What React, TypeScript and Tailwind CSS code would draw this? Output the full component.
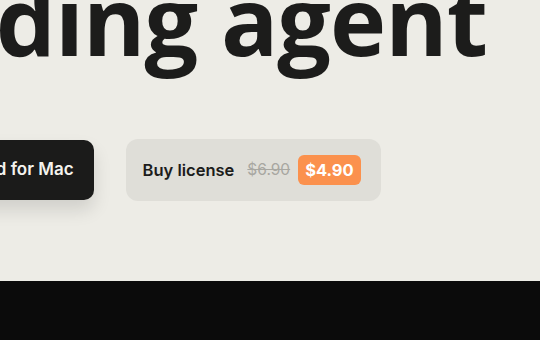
import React from 'react';

export default function App() {
  return (
    <div className="w-[540px] h-[340px] overflow-hidden bg-[#edece6]" style={{ fontFamily: 'Inter, "Liberation Sans", sans-serif' }}>
      <section className="h-[281px] flex flex-col overflow-hidden">
        <h1
          className="-mt-[28px] -ml-[110px] whitespace-nowrap text-[95px] leading-none font-bold tracking-[-0.01em] text-[#1c1c1b]"
          style={{ fontFamily: '"Open Sans", "Noto Sans", sans-serif' }}
        >
          coding agent
        </h1>
        <div className="mt-[72px] flex items-center gap-8 -ml-[96px]">
          <button className="h-[60px] px-5 rounded-[10px] bg-[#1b1b1a] text-[#f4f3ee] text-[17px] font-semibold whitespace-nowrap shadow-[0_10px_18px_rgba(0,0,0,0.12)]">
            Download for Mac
          </button>
          <div className="h-[62px] pl-[17px] pr-5 rounded-[12px] bg-[#dfded8] flex items-center">
            <span className="text-[16.5px] font-semibold text-[#1c1c1b]">Buy license</span>
            <span className="ml-[13px] text-[15.5px] text-[#a8a7a1] line-through">$6.90</span>
            <span className="ml-2 h-[30px] px-[7px] rounded-[6px] bg-[#fb914d] text-white text-[16.5px] font-bold flex items-center">$4.90</span>
          </div>
        </div>
      </section>
      <footer className="h-[59px] bg-[#0b0b0b]" />
    </div>
  );
}
